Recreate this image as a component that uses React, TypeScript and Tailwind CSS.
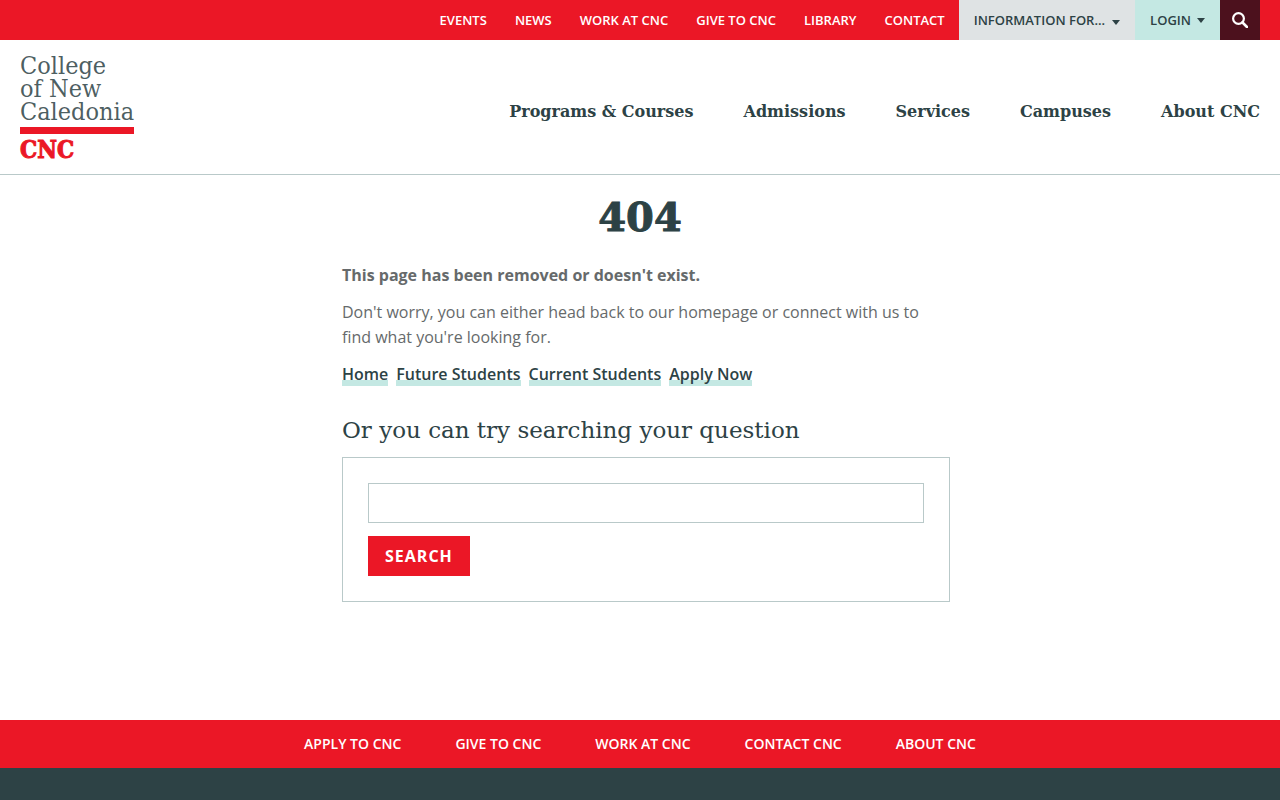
import React from "react";

const topLinks = ["Events", "News", "Work at CNC", "Give to CNC", "Library", "Contact"];
const mainLinks = ["Programs & Courses", "Admissions", "Services", "Campuses", "About CNC"];
const helpLinks = ["Home", "Future Students", "Current Students", "Apply Now"];
const footerLinks = ["Apply to CNC", "Give to CNC", "Work at CNC", "Contact CNC", "About CNC"];

const Caret = () => (
  <svg width="8" height="5" viewBox="0 0 8 5" fill="currentColor" aria-hidden="true">
    <path d="M0 0h8L4 5z" />
  </svg>
);

const TopBar = () => (
  <div className="flex h-10 items-stretch justify-end bg-[#eb1726] pr-5 text-[13px] leading-5 font-semibold uppercase">
    <nav className="flex text-white" aria-label="Quick links">
      {topLinks.map((label) => (
        <a key={label} href="#" className="flex items-center px-3.5">
          {label}
        </a>
      ))}
    </nav>
    <button className="flex items-center gap-[7px] bg-[#dfe3e4] px-[15px] uppercase">
      Information for...
      <span className="pt-1">
        <Caret />
      </span>
    </button>
    <button className="flex items-center gap-1.5 bg-[#c4e8e3] px-[15px] uppercase">
      Login
      <Caret />
    </button>
    <button className="flex w-10 items-center justify-center bg-[#4c111d] text-white" aria-label="Search">
      <svg width="16" height="16" viewBox="0 0 16 16" fill="none" stroke="currentColor" aria-hidden="true">
        <circle cx="6.500" cy="6.500" r="5.400" strokeWidth="2.200" />
        <path d="M10.500 10.500L15 15" strokeWidth="2.600" strokeLinecap="round" />
      </svg>
    </button>
  </div>
);

const Logo = () => (
  <a href="#" className="block font-['DejaVu_Serif_Condensed','DejaVu_Serif',serif]">
    <span className="block text-[25px] leading-[23px] text-[#2d4245]/85">
      College
      <br />
      of New
      <br />
      Caledonia
    </span>
    <span className="mt-1 block h-[7px] bg-[#eb1726]" />
    <span className="mt-1 block text-2xl leading-6 font-bold text-[#eb1726] [-webkit-text-stroke:1px]">
      CNC
    </span>
  </a>
);

const Header = () => (
  <header>
    <TopBar />
    <div className="flex items-center justify-between border-b border-[#b9c9c9] px-5 pt-[14px] pb-3">
      <Logo />
      <nav
        className="flex gap-[50px] pt-2 font-['DejaVu_Serif',serif] text-base font-bold"
        aria-label="Main"
      >
        {mainLinks.map((label) => (
          <a key={label} href="#">
            {label}
          </a>
        ))}
      </nav>
    </div>
  </header>
);

const SearchBox = () => (
  <form
    className="border border-[#b9c9c9] p-[25px]"
    role="search"
    onSubmit={(e) => e.preventDefault()}
  >
    <input
      type="text"
      aria-label="Search your question"
      className="block h-10 w-full border border-[#b9c9c9] px-3"
    />
    <button
      type="submit"
      className="mt-[13px] h-10 bg-[#eb1726] px-[17px] font-bold tracking-[1px] text-white uppercase"
    >
      Search
    </button>
  </form>
);

export default function App() {
  return (
    <div className="flex min-h-screen flex-col bg-white font-['Open_Sans',sans-serif] text-[#2d4245]">
      <Header />
      <main className="flex-1 pt-[18px] pb-10">
        <h1 className="text-center font-['DejaVu_Serif',serif] text-[40px] leading-[48px] font-bold [-webkit-text-stroke:1px]">
          404
        </h1>
        <div className="mx-auto mt-[22px] max-w-[620px] pl-3 leading-[25px] text-[#666a6b]">
          <p className="font-bold">This page has been removed or doesn't exist.</p>
          <p className="mt-3">
            Don't worry, you can either head back to our homepage or connect with us to find what
            you're looking for.
          </p>
          <p className="mt-3 flex flex-wrap gap-x-2 text-[#2d4245]">
            {helpLinks.map((label) => (
              <a
                key={label}
                href="#"
                className="bg-linear-to-t from-[#c4e8e3] from-[6px] to-transparent to-[6px] leading-6 font-semibold"
              >
                {label}
              </a>
            ))}
          </p>
          <h2 className="mt-7 mb-[11px] font-['DejaVu_Serif',serif] text-[23px] leading-8 text-[#2d4245]">
            Or you can try searching your question
          </h2>
          <SearchBox />
        </div>
      </main>
      <footer>
        <nav
          className="flex min-h-12 flex-wrap items-center justify-center gap-x-[54px] bg-[#eb1726] text-sm font-semibold text-white uppercase"
          aria-label="Footer"
        >
          {footerLinks.map((label) => (
            <a key={label} href="#">
              {label}
            </a>
          ))}
        </nav>
        <div className="h-8 bg-[#2d4245]" />
      </footer>
    </div>
  );
}
